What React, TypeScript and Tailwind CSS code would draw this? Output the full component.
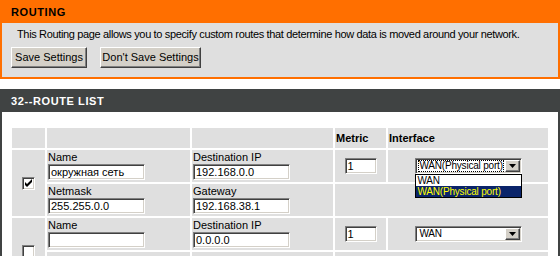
import React from 'react'

function TextBox({ value, className }: { value: string; className: string }) {
  return (
    <div
      className={`${className} h-[16px] bg-white border border-t-[#808080] border-l-[#808080] border-b-white border-r-white shadow-[inset_1px_1px_0_#404040,inset_-1px_-1px_0_#d4d0c8] pl-[2px] text-[11px] leading-[14px] text-black whitespace-nowrap overflow-hidden`}
    >
      {value}
    </div>
  )
}

function Select({ value, open }: { value: string; open?: boolean }) {
  return (
    <div className="relative w-[107px]">
      <div className="flex items-center w-[107px] h-[16px] bg-white border border-t-[#808080] border-l-[#808080] border-b-white border-r-white shadow-[inset_1px_1px_0_#404040,inset_-1px_-1px_0_#d4d0c8] p-[1px]">
        <div className="flex-1 h-full pl-[1px] pr-[1px] overflow-hidden">
          <div
            className={`h-full pl-[2px] text-[10px] leading-[12px] tracking-[-0.2px] whitespace-nowrap ${
              open ? 'outline outline-1 outline-dotted outline-black -outline-offset-1' : ''
            }`}
          >
            {value}
          </div>
        </div>
        <div className="w-[15px] h-[12px] bg-[#d4d0c8] border border-t-white border-l-white border-b-[#404040] border-r-[#404040] shadow-[inset_-1px_-1px_0_#808080] flex items-center justify-center">
          <svg width="7" height="4" viewBox="0 0 7 4">
            <path d="M0 0h7L3.5 4z" fill="#000" />
          </svg>
        </div>
      </div>
      {open && (
        <div className="absolute left-0 top-[16px] w-[107px] h-[24px] bg-white border border-black z-10 text-[10px] leading-[11px] tracking-[-0.2px]">
          <div className="h-[11px] pl-[2px] text-black">WAN</div>
          <div className="h-[11px] pl-[2px] bg-[#0a246a] text-[#ffff00] whitespace-nowrap">WAN(Physical port)</div>
        </div>
      )}
    </div>
  )
}

function CheckBox({ checked }: { checked?: boolean }) {
  return (
    <div className="w-[13px] h-[13px] bg-white border border-t-[#808080] border-l-[#808080] border-b-white border-r-white shadow-[inset_1px_1px_0_#404040,inset_-1px_-1px_0_#d4d0c8] flex items-center justify-center">
      {checked && (
        <svg width="9" height="9" viewBox="0 0 9 9">
          <path d="M1 3v3l2 2 5-5V0L3 5z" fill="#000" />
        </svg>
      )}
    </div>
  )
}

function Button({ label, className }: { label: string; className: string }) {
  return (
    <button
      className={`${className} h-[21px] bg-[#d4d0c8] border border-t-white border-l-white border-b-[#404040] border-r-[#404040] shadow-[inset_-1px_-1px_0_#808080] text-[11px] leading-[19px] text-black text-center`}
    >
      {label}
    </button>
  )
}

function Field({ label, value }: { label: string; value: string }) {
  return (
    <div className="h-[32px] pl-[1px] pt-[1px]">
      <div className="h-[13px] text-[11px] leading-[13px]">{label}</div>
      <TextBox value={value} className="w-[97px]" />
    </div>
  )
}

// second entry's lower row falls below the fold, so its fields are left out
const routes = [
  { checked: true, name: 'окружная сеть', dest: '192.168.0.0', mask: '255.255.0.0', gw: '192.168.38.1', metric: '1', iface: 'WAN(Physical port)', open: true, showLower: true },
  { checked: false, name: '', dest: '0.0.0.0', mask: '0.0.0.0', gw: '0.0.0.0', metric: '1', iface: 'WAN', open: false, showLower: false },
]

export default function App() {
  return (
    <div className="w-[560px] h-[256px] overflow-hidden bg-white text-black font-['Liberation_Sans','Noto_Sans_CJK_SC',Arial,sans-serif] text-[11px]">
      {/* Routing box */}
      <div className="h-[23px] bg-[#ff6f00] pl-[11px] flex items-center">
        <span className="text-[11px] font-bold tracking-[0.6px] pt-[2px]">ROUTING</span>
      </div>
      <div className="h-[56px] bg-[#dfdfdf] border-x-2 border-b-2 border-[#ff6f00]">
        <div className="pl-[15px] pt-[5px] h-[18px] leading-[13px] tracking-[-0.35px] whitespace-nowrap">
          This Routing page allows you to specify custom routes that determine how data is moved around your network.
        </div>
        <div className="flex gap-[13px] pl-[9px] mt-[6px]">
          <Button label="Save Settings" className="w-[76px]" />
          <Button label="Don't Save Settings" className="w-[101px]" />
        </div>
      </div>

      {/* Route list */}
      <div className="mt-[10px] h-[23px] bg-[#404343] pl-[11px] flex items-center">
        <span className="text-[11px] font-bold tracking-[0.6px] text-white pt-[2px]">32--ROUTE LIST</span>
      </div>
      <div className="border-x-2 border-[#404343] pl-[8px] pt-[14px] h-[200px]">
        <table className="table-fixed border-separate border-spacing-[2px] w-[540px]">
          <colgroup>
            <col className="w-[33px]" />
            <col className="w-[143px]" />
            <col className="w-[141px]" />
            <col className="w-[51px]" />
            <col className="w-[160px]" />
          </colgroup>
          <tbody>
            <tr>
              <td className="p-0 h-[20px] bg-[#dfdfdf]"></td>
              <td className="p-0 bg-[#dfdfdf]"></td>
              <td className="p-0 bg-[#dfdfdf]"></td>
              <td className="p-0 pl-[1px] bg-[#dfdfdf] font-bold">Metric</td>
              <td className="p-0 pl-[1px] bg-[#dfdfdf] font-bold">Interface</td>
            </tr>
            {routes.map((r, i) => (
              <React.Fragment key={i}>
                <tr>
                  <td rowSpan={2} className="p-0 bg-[#dfdfdf] align-middle">
                    <div className="flex justify-center">
                      <CheckBox checked={r.checked} />
                    </div>
                  </td>
                  <td className="p-0 bg-[#dfdfdf] align-top">
                    <Field label="Name" value={r.name} />
                  </td>
                  <td className="p-0 bg-[#dfdfdf] align-top">
                    <Field label="Destination IP" value={r.dest} />
                  </td>
                  <td className="p-0 bg-[#dfdfdf] align-middle">
                    <div className="flex justify-center">
                      <TextBox value={r.metric} className="w-[32px]" />
                    </div>
                  </td>
                  <td className="p-0 bg-[#dfdfdf] align-middle">
                    <div className="flex justify-center">
                      <Select value={r.iface} open={r.open} />
                    </div>
                  </td>
                </tr>
                <tr>
                  <td className="p-0 bg-[#dfdfdf] align-top">
                    {r.showLower ? <Field label="Netmask" value={r.mask} /> : <div className="h-[32px]" />}
                  </td>
                  <td className="p-0 bg-[#dfdfdf] align-top">
                    {r.showLower ? <Field label="Gateway" value={r.gw} /> : <div className="h-[32px]" />}
                  </td>
                  <td colSpan={2} className="p-0 bg-[#dfdfdf]"></td>
                </tr>
              </React.Fragment>
            ))}
          </tbody>
        </table>
      </div>
    </div>
  )
}
